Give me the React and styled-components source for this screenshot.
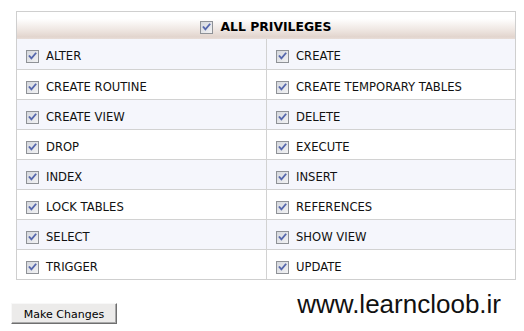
import React from "react";
import styled, { createGlobalStyle } from "styled-components";

const GlobalStyle = createGlobalStyle`
  body {
    margin: 0;
    background: #ffffff;
    font-family: "DejaVu Sans", Verdana, sans-serif;
  }
`;

const Page = styled.div`
  padding: 11px 0 0 11px;
`;

const Table = styled.div`
  width: 500px;
  margin-left: 5px;
  border: 1px solid #cfcfcf;
  box-sizing: border-box;
`;

const Header = styled.div`
  height: 27px;
  display: flex;
  align-items: center;
  justify-content: center;
  gap: 7px;
  background: linear-gradient(
    to bottom,
    #ffffff 0%,
    #ffffff 25%,
    #ede4df 70%,
    #e2d5ce 92%,
    #e8ddd8 100%
  );
`;

const HeaderLabel = styled.span`
  font-size: 12.4px;
  font-weight: bold;
  color: #000;
  padding-top: 1px;
`;

const Grid = styled.div`
  display: grid;
  grid-template-columns: 250px 1fr;
`;

const Cell = styled.label`
  height: 30px;
  box-sizing: border-box;
  display: flex;
  align-items: center;
  gap: 7px;
  padding: 1px 0 0 9px;
  background: ${(props) => (props.$shade ? "#f5f6fc" : "#ffffff")};
  border-top: ${(props) => (props.$first ? "none" : "1px solid #d2d2d2")};
  border-right: ${(props) => (props.$left ? "1px solid #d2d2d2" : "none")};
`;

const Label = styled.span`
  font-size: 11.6px;
  color: #111;
  padding-top: 3px;
`;

const Box = styled.span`
  width: 13px;
  height: 13px;
  flex: none;
  display: block;
`;

const Footer = styled.div`
  width: 490px;
  display: flex;
  justify-content: space-between;
  align-items: flex-start;
  margin-top: 9px;
`;

const Button = styled.button`
  margin-top: 14px;
  height: 21px;
  width: 106px;
  padding: 2px 0 0;
  font-family: "DejaVu Sans", Verdana, sans-serif;
  font-size: 11px;
  color: #000;
  background: #ecebea;
  border: 1px solid;
  border-color: #f8f8f8 #6f6f6f #6f6f6f #f8f8f8;
  box-shadow: inset -1px -1px 0 #a9a9a9;
  cursor: pointer;
`;

const Watermark = styled.div`
  font-family: "Liberation Sans", Arial, sans-serif;
  font-size: 26px;
  line-height: 30px;
  color: #111;
`;

function Check() {
  return (
    <Box>
      <svg width="13" height="13" viewBox="0 0 13 13">
        <defs>
          <linearGradient id="cbg" x1="0" y1="0" x2="1" y2="1">
            <stop offset="0" stopColor="#d3d6dc" />
            <stop offset="1" stopColor="#f4f4f5" />
          </linearGradient>
        </defs>
        <rect x="0.5" y="0.5" width="12" height="12" fill="url(#cbg)" stroke="#8f9297" />
        <path
          d="M3.5 6.2 L5.4 8.4 L9.6 3.4"
          fill="none"
          stroke="#5567ad"
          strokeWidth="1.8"
          strokeLinecap="square"
        />
      </svg>
    </Box>
  );
}

const privileges = [
  ["ALTER", "CREATE"],
  ["CREATE ROUTINE", "CREATE TEMPORARY TABLES"],
  ["CREATE VIEW", "DELETE"],
  ["DROP", "EXECUTE"],
  ["INDEX", "INSERT"],
  ["LOCK TABLES", "REFERENCES"],
  ["SELECT", "SHOW VIEW"],
  ["TRIGGER", "UPDATE"],
];

export default function App() {
  return (
    <Page>
      <GlobalStyle />
      <Table>
        <Header>
          <Check />
          <HeaderLabel>ALL PRIVILEGES</HeaderLabel>
        </Header>
        <Grid>
          {privileges.map((row, i) =>
            row.map((name, j) => (
              <Cell key={name} $shade={i % 2 === 0} $first={i === 0} $left={j === 0}>
                <Check />
                <Label>{name}</Label>
              </Cell>
            ))
          )}
        </Grid>
      </Table>
      <Footer>
        <Button>Make Changes</Button>
        <Watermark>www.learncloob.ir</Watermark>
      </Footer>
    </Page>
  );
}
